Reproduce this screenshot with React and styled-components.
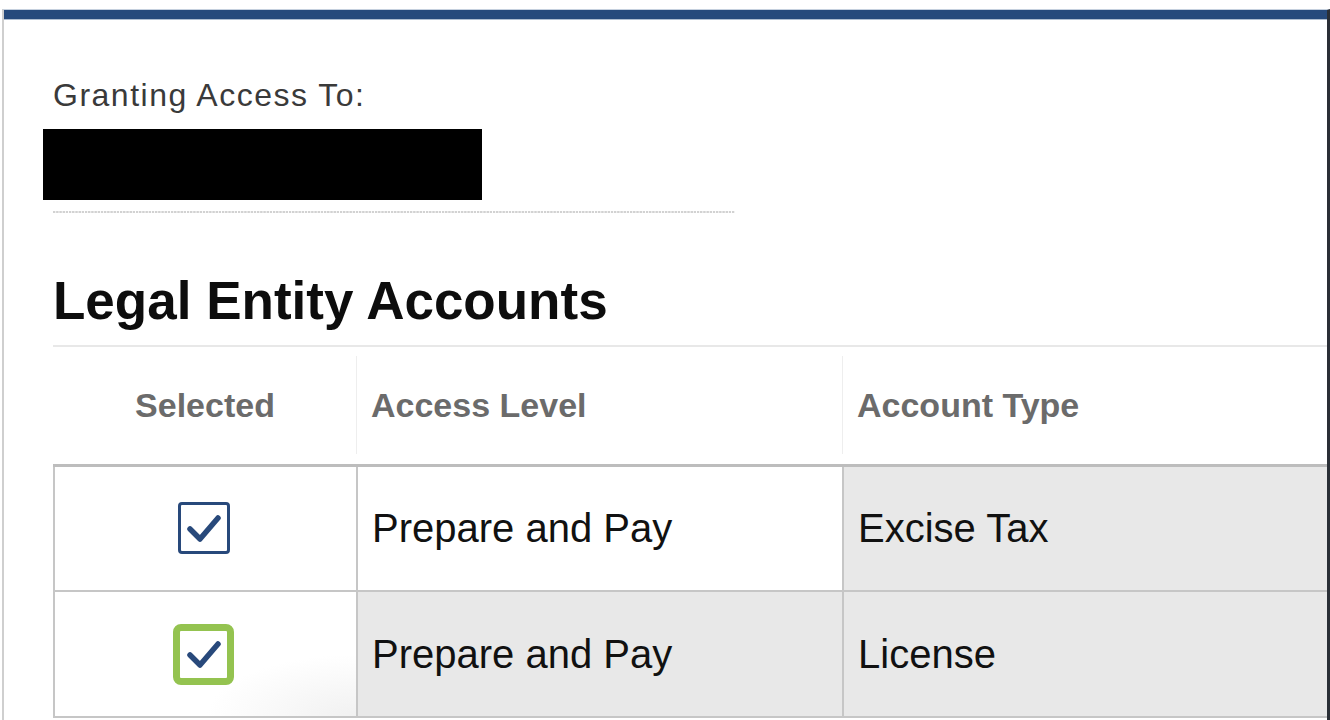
import React from 'react';
import styled, { createGlobalStyle } from 'styled-components';

const GlobalStyle = createGlobalStyle`
    html, body {
        margin: 0;
        padding: 0;
        background: #ffffff;
    }
    body {
        font-family: "Liberation Sans", Arial, sans-serif;
        overflow: hidden;
    }
`;

const rows = [
    { id: 1, access: 'Prepare and Pay', type: 'Excise Tax', focused: false, hover: false },
    { id: 2, access: 'Prepare and Pay', type: 'License', focused: true, hover: true },
];

function CheckBox({ focused }) {
    return (
        <BoxStyled $focused={focused}>
            <svg width="34" height="30" viewBox="0 0 34 30">
                <path
                    d="M3 15 L13 25 L31 4"
                    fill="none"
                    stroke="#28497b"
                    strokeWidth="5.5"
                    strokeLinecap="round"
                    strokeLinejoin="round"
                />
            </svg>
        </BoxStyled>
    );
}

function App() {
    return (
        <>
            <GlobalStyle />
            <FrameStyled>
                <div className="granting">
                    <span className="label">Granting Access To:</span>
                    <div className="redacted" />
                    <div className="dots" />
                </div>
                <h1>Legal Entity Accounts</h1>
                <TableStyled>
                    <thead>
                        <tr>
                            <th className="center"><span>Selected</span></th>
                            <th><span>Access Level</span></th>
                            <th className="last"><span>Account Type</span></th>
                        </tr>
                    </thead>
                    <tbody>
                        {rows.map((row) => (
                            <tr key={row.id}>
                                <Cell className="center" $fade={row.hover}>
                                    <CheckBox focused={row.focused} />
                                </Cell>
                                <Cell $shade={row.hover}>{row.access}</Cell>
                                <Cell $shade>{row.type}</Cell>
                            </tr>
                        ))}
                    </tbody>
                </TableStyled>
            </FrameStyled>
        </>
    );
}

const FrameStyled = styled.div`
    margin: 9px 0 0 2px;
    height: 711px;
    box-sizing: border-box;
    border-top: 1px solid #c5d0de;
    box-shadow: inset 0 9px 0 #264a7c, inset 0 10px 0 #aebdd0;
    border-left: 2px solid #cfcfcf;
    border-right: 3px solid #2a2f36;
    padding: 10px 0 0 49px;
    overflow: hidden;

    .granting {
        padding-top: 57px;
        display: flex;
        flex-direction: column;
    }

    .label {
        font-size: 32px;
        letter-spacing: 1.5px;
        line-height: 36px;
        color: #3a3a3a;
    }

    .redacted {
        width: 439px;
        height: 71px;
        margin: 16px 0 0 -10px;
        background: #000000;
    }

    .dots {
        width: 682px;
        height: 2px;
        margin-top: 11px;
        background-image: linear-gradient(to right, #d2d2d2 2px, transparent 2px);
        background-size: 3.2px 2px;
    }

    h1 {
        margin: 58px 0 0;
        padding-bottom: 14px;
        font-size: 53px;
        line-height: 60px;
        font-weight: 700;
        color: #0d0d0d;
        border-bottom: 2px solid #e8e8e8;
    }
`;

const TableStyled = styled.table`
    width: 1276px;
    border-collapse: collapse;
    table-layout: fixed;

    th, td {
        box-sizing: border-box;
    }

    th:nth-child(1), td:nth-child(1) {
        width: 303px;
    }
    th:nth-child(2), td:nth-child(2) {
        width: 486px;
    }

    th {
        height: 118px;
        padding: 0;
        text-align: left;
        font-size: 34px;
        font-weight: 700;
        color: #6b6b6b;
        border-bottom: 3px solid #bdbdbd;

        span {
            display: flex;
            align-items: center;
            height: 98px;
            padding-left: 14px;
            border-right: 1px solid #eeeeee;
        }

        &.center span {
            justify-content: center;
            padding-left: 0;
        }

        &.last span {
            border-right: none;
        }
    }
`;

const Cell = styled.td`
    height: 126px;
    padding: 0 0 0 14px;
    font-size: 40px;
    color: #111111;
    border: 2px solid #c6c6c6;
    background: ${({ $shade }) => ($shade ? '#e8e8e8' : '#ffffff')};
    ${({ $fade }) =>
        $fade &&
        'background: radial-gradient(ellipse at 100% 100%, #f1f1f1 0%, #ffffff 35%);'}

    &.center {
        padding: 0;
        text-align: center;
        vertical-align: middle;
    }
`;

const BoxStyled = styled.div`
    display: inline-flex;
    align-items: center;
    justify-content: center;
    box-sizing: border-box;
    width: ${({ $focused }) => ($focused ? '61px' : '52px')};
    height: ${({ $focused }) => ($focused ? '61px' : '52px')};
    margin-left: -4px;
    background: #ffffff;
    border: ${({ $focused }) => ($focused ? '7px solid #94c350' : '3px solid #28497b')};
    border-radius: ${({ $focused }) => ($focused ? '8px' : '4px')};
    vertical-align: middle;

    svg {
        display: block;
        margin-top: 2px;
    }
`;

export default App;
